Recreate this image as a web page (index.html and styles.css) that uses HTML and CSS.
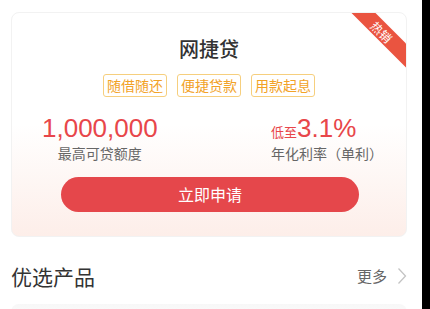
FILE: index.html
```html
<!DOCTYPE html>
<html lang="zh-CN">
<head>
<meta charset="UTF-8">
<meta name="viewport" content="width=device-width, initial-scale=1.0">
<title>网捷贷</title>
<link rel="stylesheet" href="styles.css">
</head>
<body>

<div class="page">

  <!-- Loan card -->
  <div class="loan-card">
    <div class="hot-ribbon">热销</div>
    <h2 class="loan-title">网捷贷</h2>
    <div class="tag-list">
      <span class="tag">随借随还</span>
      <span class="tag">便捷贷款</span>
      <span class="tag">用款起息</span>
    </div>
    <div class="loan-info">
      <div class="info-left">
        <div class="info-num">1,000,000</div>
        <div class="info-label">最高可贷额度</div>
      </div>
      <div class="info-right">
        <div class="info-num"><span class="info-pre">低至</span>3.1%</div>
        <div class="info-label">年化利率（单利）</div>
      </div>
    </div>
    <button class="apply-button" type="button">立即申请</button>
  </div>

  <!-- Section header -->
  <div class="section-head">
    <span class="section-title">优选产品</span>
    <span class="section-more">更多
      <svg width="10" height="18" viewBox="0 0 10 18"><path d="M1.5 1.5 L8.5 9 L1.5 16.5" fill="none" stroke="#c4c4c4" stroke-width="1.3"/></svg>
    </span>
  </div>

  <div class="next-card"></div>
</div>

</body>
</html>
```

FILE: styles.css
```css
body {
  margin: 0;
  background: #000;
  font-family: "Noto Sans CJK SC", "Liberation Sans", sans-serif;
}
.page {
  width: 422px;
  height: 309px;
  background: #fff;
  padding: 12px 15px 0 11px;
  box-sizing: border-box;
  overflow: hidden;
}
.loan-card {
  position: relative;
  overflow: hidden;
  border-radius: 8px;
  border: 1px solid #f2f2f2;
  background: linear-gradient(to bottom, #fff 0%, #fff 50%, #fdeee9 100%);
  padding: 22px 0 24px;
  text-align: center;
}
.hot-ribbon {
  position: absolute;
  top: 10px;
  right: -21px;
  width: 90px;
  height: 17px;
  line-height: 17px;
  background: #ea5440;
  color: #fff;
  font-size: 12px;
  text-align: center;
  transform: rotate(45deg);
}
.loan-title {
  margin: 0;
  font-size: 20px;
  line-height: 28px;
  font-weight: 500;
  color: #333;
}
.tag-list {
  display: flex;
  justify-content: center;
  gap: 10px;
  margin-top: 11px;
}
.tag {
  border: 1px solid #f6cf7e;
  border-radius: 3px;
  color: #f2a227;
  font-size: 14px;
  line-height: 21px;
  padding: 0 3px;
}
.loan-info {
  display: flex;
  justify-content: space-between;
  padding: 0 23px 0 30px;
  margin-top: 16px;
}
.info-left {
  text-align: center;
}
.info-right {
  text-align: left;
}
.info-num {
  font-family: "Liberation Sans", sans-serif;
  font-size: 26px;
  line-height: 30px;
  height: 30px;
  color: #e8464a;
}
.info-pre {
  font-family: "Noto Sans CJK SC", sans-serif;
  font-size: 13px;
  line-height: 1;
}
.info-label {
  font-size: 14px;
  line-height: 20px;
  color: #666;
}
.apply-button {
  display: block;
  width: 298px;
  height: 35px;
  margin: 14px auto 0 49px;
  border: none;
  border-radius: 18px;
  background: #e5474b;
  color: #fff;
  font-family: "Noto Sans CJK SC", sans-serif;
  font-size: 16px;
  line-height: 35px;
  padding: 0;
  cursor: pointer;
}
.section-head {
  display: flex;
  justify-content: space-between;
  align-items: center;
  margin-top: 25px;
  height: 28px;
  line-height: 28px;
}
.section-title {
  font-size: 21px;
  color: #333;
}
.section-more {
  display: flex;
  align-items: center;
  gap: 10px;
  font-size: 15px;
  color: #666;
}
.next-card {
  margin-top: 14px;
  height: 20px;
  border-radius: 8px 8px 0 0;
  background: linear-gradient(to bottom, #f7f7f7, #fff);
}
```
